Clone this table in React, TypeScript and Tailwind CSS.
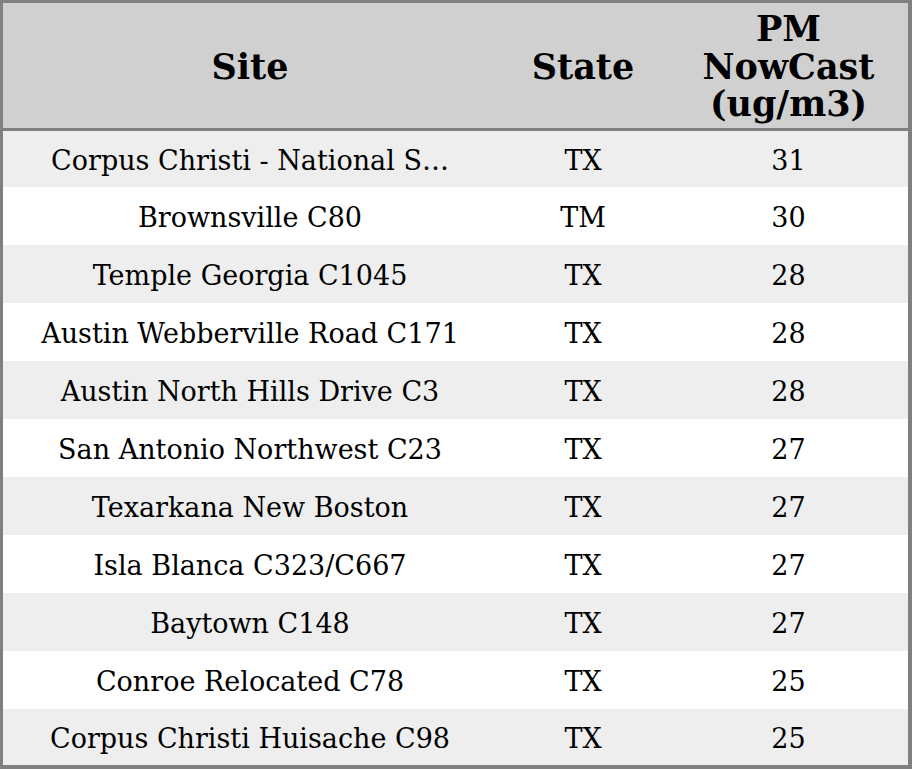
import React from "react";

const rows: [string, string, string][] = [
  ["Corpus Christi - National S…", "TX", "31"],
  ["Brownsville C80", "TM", "30"],
  ["Temple Georgia C1045", "TX", "28"],
  ["Austin Webberville Road C171", "TX", "28"],
  ["Austin North Hills Drive C3", "TX", "28"],
  ["San Antonio Northwest C23", "TX", "27"],
  ["Texarkana New Boston", "TX", "27"],
  ["Isla Blanca C323/C667", "TX", "27"],
  ["Baytown C148", "TX", "27"],
  ["Conroe Relocated C78", "TX", "25"],
  ["Corpus Christi Huisache C98", "TX", "25"],
];

export default function App() {
  return (
    <div
      className="w-[912px] h-[769px] bg-[#808080] pt-[3px] pl-[3px] pr-[4px] pb-[4px] flex flex-col text-black"
      style={{ fontFamily: '"DejaVu Serif", serif' }}
    >
      <div className="h-[125px] pt-[2px] bg-[#d0d0d0] grid grid-cols-[494px_172px_239px] items-center text-center font-bold text-[35px] leading-[37.5px]">
        <div>Site</div>
        <div>State</div>
        <div>
          PM
          <br />
          NowCast
          <br />
          (ug/m3)
        </div>
      </div>
      <div className="h-[3px]" />
      <div className="flex flex-col">
        {rows.map((r, i) => (
          <div
            key={i}
            className={`grid grid-cols-[494px_172px_239px] items-center text-center text-[27px] leading-[32px] pt-[4px] ${
              i === 0 || i === rows.length - 1 ? "h-[56px]" : "h-[58px]"
            } ${i % 2 === 0 ? "bg-[#eeeeee]" : "bg-white"}`}
          >
            <div className="whitespace-nowrap">{r[0]}</div>
            <div>{r[1]}</div>
            <div>{r[2]}</div>
          </div>
        ))}
      </div>
    </div>
  );
}
